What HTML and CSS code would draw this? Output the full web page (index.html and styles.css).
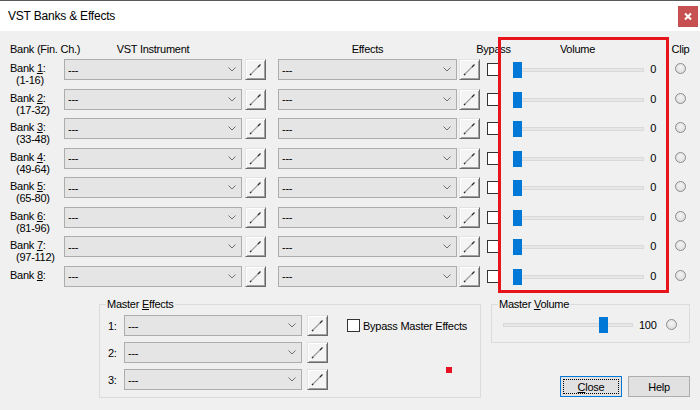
FILE: index.html
```html
<!DOCTYPE html>
<html lang="en">
<head>
    <meta charset="UTF-8">
    <title>VST Banks &amp; Effects</title>
    <link rel="stylesheet" href="styles.css">
</head>
<body>
<div class="window">
    <div class="titlebar">
        <span class="title">VST Banks &amp; Effects</span>
        <span class="close-x"><svg width="20" height="21" viewBox="0 0 20 21"><path d="M7 7.5 L13 13.5 M13 7.5 L7 13.5" stroke="#fff" stroke-width="2"/></svg></span>
    </div>
    <div class="content">
        <div class="row head">
            <span class="bank-label">Bank (Fin. Ch.)</span>
            <span class="hcol w-combo">VST Instrument</span>
            <span class="hcol w-combo2">Effects</span>
            <span class="hcol w-check">Bypass</span>
            <span class="hcol w-slider">Volume</span>
            <span class="hcol w-clip">Clip</span>
        </div>

        <div class="banks">
            <div class="row">
                <div class="bank-label">Bank <u>1</u>:<br><span class="range">(1-16)</span></div>
                <div class="combo"><span>---</span><svg class="chev" width="8" height="5"><polyline points="0.5,0.5 4,4 7.5,0.5"/></svg></div>
                <button class="edit"><svg width="19" height="19"><path class="pen" d="M4 15 L13 6"/><path class="tip" d="M12 7 L14.5 4.5 M4 15 L5.2 13.8"/></svg></button>
                <div class="combo fx"><span>---</span><svg class="chev" width="8" height="5"><polyline points="0.5,0.5 4,4 7.5,0.5"/></svg></div>
                <button class="edit fx"><svg width="19" height="19"><path class="pen" d="M4 15 L13 6"/><path class="tip" d="M12 7 L14.5 4.5 M4 15 L5.2 13.8"/></svg></button>
                <span class="check"></span>
                <div class="slider"><span class="track"></span><span class="thumb"></span></div>
                <span class="value">0</span>
                <span class="led"></span>
            </div>
            <div class="row">
                <div class="bank-label">Bank <u>2</u>:<br><span class="range">(17-32)</span></div>
                <div class="combo"><span>---</span><svg class="chev" width="8" height="5"><polyline points="0.5,0.5 4,4 7.5,0.5"/></svg></div>
                <button class="edit"><svg width="19" height="19"><path class="pen" d="M4 15 L13 6"/><path class="tip" d="M12 7 L14.5 4.5 M4 15 L5.2 13.8"/></svg></button>
                <div class="combo fx"><span>---</span><svg class="chev" width="8" height="5"><polyline points="0.5,0.5 4,4 7.5,0.5"/></svg></div>
                <button class="edit fx"><svg width="19" height="19"><path class="pen" d="M4 15 L13 6"/><path class="tip" d="M12 7 L14.5 4.5 M4 15 L5.2 13.8"/></svg></button>
                <span class="check"></span>
                <div class="slider"><span class="track"></span><span class="thumb"></span></div>
                <span class="value">0</span>
                <span class="led"></span>
            </div>
            <div class="row">
                <div class="bank-label">Bank <u>3</u>:<br><span class="range">(33-48)</span></div>
                <div class="combo"><span>---</span><svg class="chev" width="8" height="5"><polyline points="0.5,0.5 4,4 7.5,0.5"/></svg></div>
                <button class="edit"><svg width="19" height="19"><path class="pen" d="M4 15 L13 6"/><path class="tip" d="M12 7 L14.5 4.5 M4 15 L5.2 13.8"/></svg></button>
                <div class="combo fx"><span>---</span><svg class="chev" width="8" height="5"><polyline points="0.5,0.5 4,4 7.5,0.5"/></svg></div>
                <button class="edit fx"><svg width="19" height="19"><path class="pen" d="M4 15 L13 6"/><path class="tip" d="M12 7 L14.5 4.5 M4 15 L5.2 13.8"/></svg></button>
                <span class="check"></span>
                <div class="slider"><span class="track"></span><span class="thumb"></span></div>
                <span class="value">0</span>
                <span class="led"></span>
            </div>
            <div class="row">
                <div class="bank-label">Bank <u>4</u>:<br><span class="range">(49-64)</span></div>
                <div class="combo"><span>---</span><svg class="chev" width="8" height="5"><polyline points="0.5,0.5 4,4 7.5,0.5"/></svg></div>
                <button class="edit"><svg width="19" height="19"><path class="pen" d="M4 15 L13 6"/><path class="tip" d="M12 7 L14.5 4.5 M4 15 L5.2 13.8"/></svg></button>
                <div class="combo fx"><span>---</span><svg class="chev" width="8" height="5"><polyline points="0.5,0.5 4,4 7.5,0.5"/></svg></div>
                <button class="edit fx"><svg width="19" height="19"><path class="pen" d="M4 15 L13 6"/><path class="tip" d="M12 7 L14.5 4.5 M4 15 L5.2 13.8"/></svg></button>
                <span class="check"></span>
                <div class="slider"><span class="track"></span><span class="thumb"></span></div>
                <span class="value">0</span>
                <span class="led"></span>
            </div>
            <div class="row">
                <div class="bank-label">Bank <u>5</u>:<br><span class="range">(65-80)</span></div>
                <div class="combo"><span>---</span><svg class="chev" width="8" height="5"><polyline points="0.5,0.5 4,4 7.5,0.5"/></svg></div>
                <button class="edit"><svg width="19" height="19"><path class="pen" d="M4 15 L13 6"/><path class="tip" d="M12 7 L14.5 4.5 M4 15 L5.2 13.8"/></svg></button>
                <div class="combo fx"><span>---</span><svg class="chev" width="8" height="5"><polyline points="0.5,0.5 4,4 7.5,0.5"/></svg></div>
                <button class="edit fx"><svg width="19" height="19"><path class="pen" d="M4 15 L13 6"/><path class="tip" d="M12 7 L14.5 4.5 M4 15 L5.2 13.8"/></svg></button>
                <span class="check"></span>
                <div class="slider"><span class="track"></span><span class="thumb"></span></div>
                <span class="value">0</span>
                <span class="led"></span>
            </div>
            <div class="row">
                <div class="bank-label">Bank <u>6</u>:<br><span class="range">(81-96)</span></div>
                <div class="combo"><span>---</span><svg class="chev" width="8" height="5"><polyline points="0.5,0.5 4,4 7.5,0.5"/></svg></div>
                <button class="edit"><svg width="19" height="19"><path class="pen" d="M4 15 L13 6"/><path class="tip" d="M12 7 L14.5 4.5 M4 15 L5.2 13.8"/></svg></button>
                <div class="combo fx"><span>---</span><svg class="chev" width="8" height="5"><polyline points="0.5,0.5 4,4 7.5,0.5"/></svg></div>
                <button class="edit fx"><svg width="19" height="19"><path class="pen" d="M4 15 L13 6"/><path class="tip" d="M12 7 L14.5 4.5 M4 15 L5.2 13.8"/></svg></button>
                <span class="check"></span>
                <div class="slider"><span class="track"></span><span class="thumb"></span></div>
                <span class="value">0</span>
                <span class="led"></span>
            </div>
            <div class="row">
                <div class="bank-label">Bank <u>7</u>:<br><span class="range">(97-112)</span></div>
                <div class="combo"><span>---</span><svg class="chev" width="8" height="5"><polyline points="0.5,0.5 4,4 7.5,0.5"/></svg></div>
                <button class="edit"><svg width="19" height="19"><path class="pen" d="M4 15 L13 6"/><path class="tip" d="M12 7 L14.5 4.5 M4 15 L5.2 13.8"/></svg></button>
                <div class="combo fx"><span>---</span><svg class="chev" width="8" height="5"><polyline points="0.5,0.5 4,4 7.5,0.5"/></svg></div>
                <button class="edit fx"><svg width="19" height="19"><path class="pen" d="M4 15 L13 6"/><path class="tip" d="M12 7 L14.5 4.5 M4 15 L5.2 13.8"/></svg></button>
                <span class="check"></span>
                <div class="slider"><span class="track"></span><span class="thumb"></span></div>
                <span class="value">0</span>
                <span class="led"></span>
            </div>
            <div class="row">
                <div class="bank-label">Bank <u>8</u>:</div>
                <div class="combo"><span>---</span><svg class="chev" width="8" height="5"><polyline points="0.5,0.5 4,4 7.5,0.5"/></svg></div>
                <button class="edit"><svg width="19" height="19"><path class="pen" d="M4 15 L13 6"/><path class="tip" d="M12 7 L14.5 4.5 M4 15 L5.2 13.8"/></svg></button>
                <div class="combo fx"><span>---</span><svg class="chev" width="8" height="5"><polyline points="0.5,0.5 4,4 7.5,0.5"/></svg></div>
                <button class="edit fx"><svg width="19" height="19"><path class="pen" d="M4 15 L13 6"/><path class="tip" d="M12 7 L14.5 4.5 M4 15 L5.2 13.8"/></svg></button>
                <span class="check"></span>
                <div class="slider"><span class="track"></span><span class="thumb"></span></div>
                <span class="value">0</span>
                <span class="led"></span>
            </div>
        </div>

        <div class="master">
            <fieldset class="fx-group">
                <legend>Master <u>E</u>ffects</legend>
                <div class="fx-inner">
                    <div class="fx-rows">
                        <div class="mrow">
                            <span class="mlabel">1:</span>
                            <div class="combo"><span>---</span><svg class="chev" width="8" height="5"><polyline points="0.5,0.5 4,4 7.5,0.5"/></svg></div>
                            <button class="edit m"><svg width="19" height="19"><path class="pen" d="M4 15 L13 6"/><path class="tip" d="M12 7 L14.5 4.5 M4 15 L5.2 13.8"/></svg></button>
                        </div>
                        <div class="mrow">
                            <span class="mlabel">2:</span>
                            <div class="combo"><span>---</span><svg class="chev" width="8" height="5"><polyline points="0.5,0.5 4,4 7.5,0.5"/></svg></div>
                            <button class="edit m"><svg width="19" height="19"><path class="pen" d="M4 15 L13 6"/><path class="tip" d="M12 7 L14.5 4.5 M4 15 L5.2 13.8"/></svg></button>
                        </div>
                        <div class="mrow">
                            <span class="mlabel">3:</span>
                            <div class="combo"><span>---</span><svg class="chev" width="8" height="5"><polyline points="0.5,0.5 4,4 7.5,0.5"/></svg></div>
                            <button class="edit m"><svg width="19" height="19"><path class="pen" d="M4 15 L13 6"/><path class="tip" d="M12 7 L14.5 4.5 M4 15 L5.2 13.8"/></svg></button>
                        </div>
                    </div>
                    <div class="fx-side">
                        <label class="bypass-master"><span class="check"></span>Bypass Master Effects</label>
                        <span class="red-dot"></span>
                    </div>
                </div>
            </fieldset>

            <div class="right-col">
                <fieldset class="vol-group">
                    <legend>Master <u>V</u>olume</legend>
                    <div class="vol-inner">
                        <div class="slider master-slider"><span class="track"></span><span class="thumb"></span></div>
                        <span class="mvalue">100</span>
                        <span class="led"></span>
                    </div>
                </fieldset>
                <div class="buttons">
                    <button class="btn default"><u>C</u>lose</button>
                    <button class="btn">Help</button>
                </div>
            </div>
        </div>
    </div>
    <div class="highlight"></div>
</div>
</body>
</html>
```

FILE: styles.css
```css
body { margin: 0; background: #f0f0f0; font-family: "Liberation Sans", Arial, sans-serif; font-size: 11px; letter-spacing: -0.25px; color: #000; }
.window { position: relative; width: 700px; height: 410px; background: #f0f0f0; border-top: 1px solid #5a5a5a; box-sizing: border-box; overflow: hidden; }

/* title bar */
.titlebar { height: 30px; background: #fff; display: flex; align-items: center; justify-content: space-between; padding: 0 2px 0 8px; }
.title { font-size: 12px; letter-spacing: -0.2px; }
.close-x { display: flex; width: 20px; height: 21px; background: #c75050; }

.content { padding-top: 12px; }

/* column headers */
.row.head { height: 12px; line-height: 12px; margin-bottom: 4px; }
.row.head .bank-label { padding-top: 0; }
.hcol { display: flex; justify-content: center; white-space: nowrap; flex: none; }
.w-combo { width: 178px; margin-right: 24px; }
.w-combo2 { width: 179px; margin-left: 12px; margin-right: 23px; }
.w-check { width: 13px; margin-left: 7px; }
.w-slider { width: 135px; margin-left: 10px; }
.w-clip { width: 11px; margin-left: 30px; }

/* bank rows */
.row { display: flex; align-items: flex-start; height: 29.5px; padding-left: 10px; }
.bank-label { width: 54px; flex: none; line-height: 12px; padding-top: 3px; white-space: nowrap; }
.range { padding-left: 6px; }

.combo { width: 178px; height: 21px; flex: none; box-sizing: border-box; border: 1px solid #adadad; background: #e5e5e5; display: flex; align-items: center; padding-left: 3px; }
.combo.fx { width: 179px; margin-left: 12px; }
.chev { margin-left: auto; margin-right: 5px; fill: none; stroke: #707070; stroke-width: 1; }

.edit { width: 21px; height: 21px; flex: none; margin-left: 3px; padding: 0; box-sizing: border-box; background: #f4f4f4; border: 1px solid; border-color: #e3e3e3 #696969 #696969 #e3e3e3; box-shadow: inset 1px 1px #fff, inset -1px -1px #a0a0a0; display: flex; align-items: center; justify-content: center; }
.edit.fx { margin-left: 2px; }
.edit .pen { stroke: #9a9a9a; stroke-width: 1.1; }
.edit .tip { stroke: #2a2a2a; stroke-width: 1.2; }

.check { width: 13px; height: 13px; flex: none; box-sizing: border-box; border: 1px solid #333; background: #fff; margin: 4px 0 0 7px; }

.slider { position: relative; width: 135px; height: 21px; flex: none; margin-left: 10px; }
.track { position: absolute; left: 3px; right: 1px; top: 9px; height: 4px; box-sizing: border-box; border: 1px solid #d9d9d9; background: #e7e7e7; }
.thumb { position: absolute; left: 3px; top: 3px; width: 9px; height: 16px; background: #0078d7; }
.value { width: 11px; flex: none; text-align: right; line-height: 21px; }
.led { width: 11px; height: 11px; flex: none; box-sizing: border-box; border-radius: 50%; border: 1px solid #8c8c8c; background: radial-gradient(circle at 50% 40%, #f4f4f4, #d8d8d8); margin: 4px 0 0 19px; }

/* master section */
.master { display: flex; align-items: flex-start; padding-left: 99px; margin-top: 3px; }
fieldset { margin: 0; border: 1px solid #dcdcdc; min-inline-size: auto; }
legend { padding: 0 1px; margin-left: -2px; line-height: 12px; }

.fx-group { width: 382px; box-sizing: border-box; padding: 5px 0 7px 8px; }
.fx-inner { display: flex; }
.mrow { display: flex; align-items: center; height: 21px; margin-bottom: 6px; }
.mrow:last-child { margin-bottom: 0; }
.mlabel { width: 16px; }
.edit.m { margin-left: 5px; }
.fx-side { display: flex; flex-direction: column; margin-left: 19px; }
.bypass-master { display: flex; align-items: center; height: 21px; white-space: nowrap; }
.bypass-master .check { margin: 0 3px 0 0; }
.red-dot { width: 6px; height: 6px; background: #e81123; margin: 31px 0 0 99px; }

.right-col { width: 199px; margin-left: 10px; display: flex; flex-direction: column; }
.vol-group { box-sizing: border-box; padding: 7px 0 9px 8px; }
.vol-inner { display: flex; align-items: flex-start; }
.master-slider { width: 136px; height: 16px; margin-left: 0; }
.master-slider .track { left: 3px; right: 3px; top: 6px; }
.master-slider .thumb { left: 99px; top: 0; }
.mvalue { margin-left: 3px; line-height: 16px; }
.vol-inner .led { margin: 2px 0 0 9px; }

.buttons { display: flex; justify-content: flex-end; gap: 6px; margin-top: 33px; }
.btn { position: relative; width: 62px; height: 21px; padding: 0; box-sizing: border-box; border: 1px solid #adadad; background: #e1e1e1; font: inherit; letter-spacing: inherit; color: #000; }
.btn.default { border-color: #0078d7; }
.btn.default::after { content: ""; position: absolute; left: 2px; top: 2px; right: 2px; bottom: 2px; border: 1px dotted #000; }

/* red annotation frame */
.highlight { position: absolute; left: 498px; top: 36px; width: 171px; height: 256px; box-sizing: border-box; border: 3px solid #e8141c; pointer-events: none; }
```
